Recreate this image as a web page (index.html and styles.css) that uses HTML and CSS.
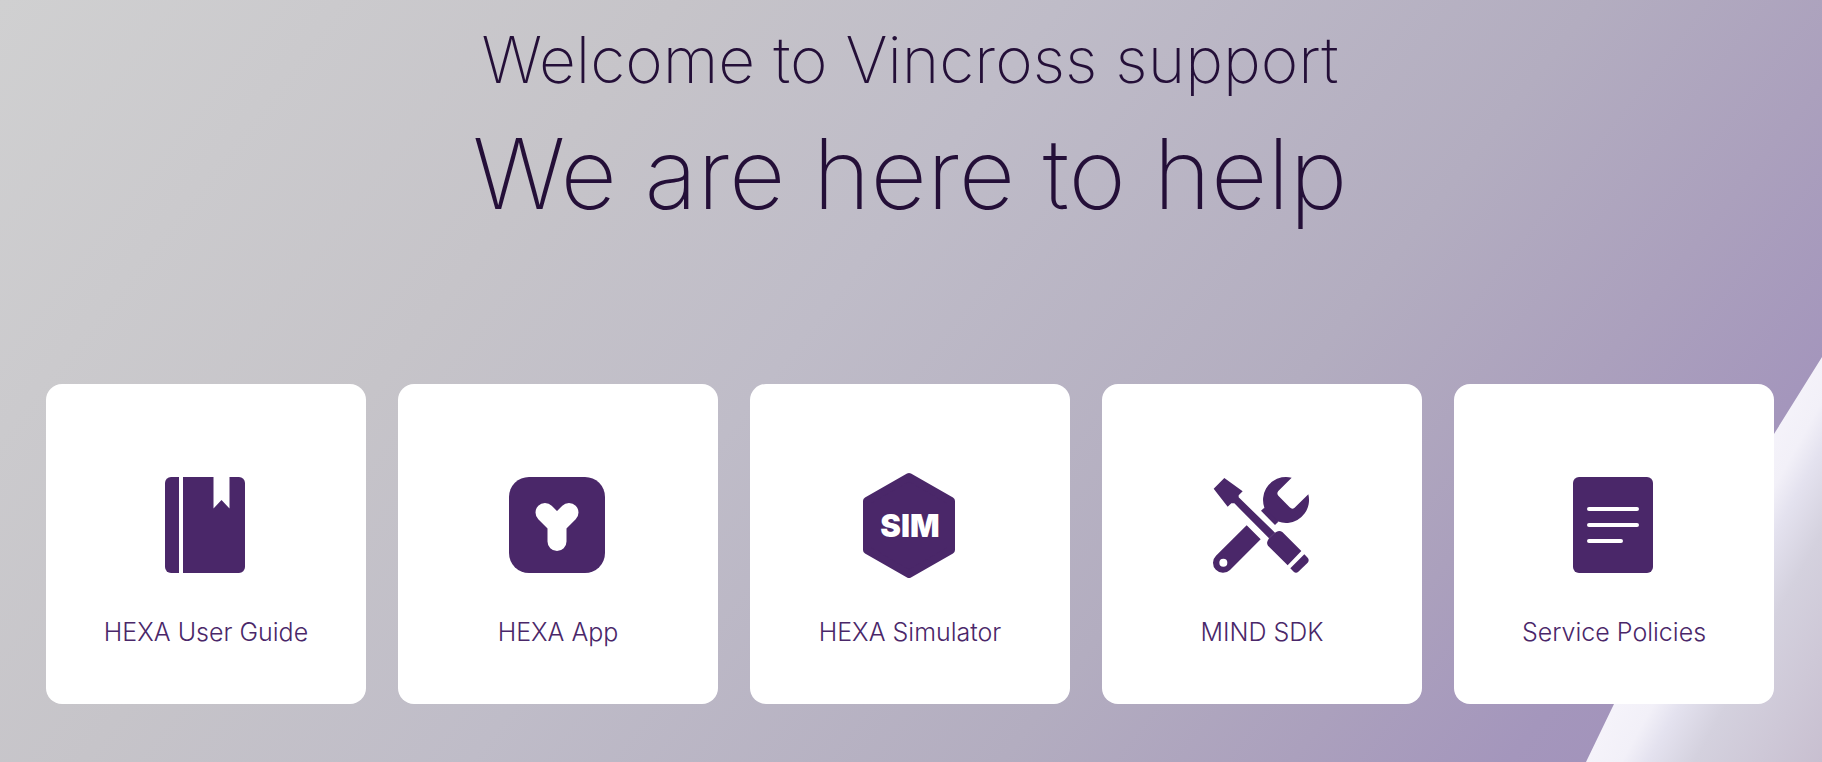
FILE: index.html
```html
<!DOCTYPE html>
<html lang="en">
<head>
<meta charset="utf-8">
<meta name="viewport" content="width=device-width, initial-scale=1">
<title>Vincross support</title>
<link rel="stylesheet" href="styles.css">
</head>
<body>
<main class="support">
  <svg class="backdrop" viewBox="0 0 1822 762" preserveAspectRatio="none" aria-hidden="true">
    <defs>
      <linearGradient id="shell" gradientUnits="userSpaceOnUse" x1="1586" y1="762" x2="1766" y2="862">
        <stop offset="0" stop-color="#f5f3fa"/>
        <stop offset="0.15" stop-color="#f2f0f8"/>
        <stop offset="0.26" stop-color="#e4e2ef"/>
        <stop offset="0.46" stop-color="#d4d1de"/>
        <stop offset="1" stop-color="#c8bfd0"/>
      </linearGradient>
    </defs>
    <path fill="url(#shell)" d="M1822 357 L1774 434 Q1680 566 1614 704 L1586 762 H1822 Z"/>
  </svg>
  <header class="hero">
    <p class="welcome">Welcome to Vincross support</p>
    <h1 class="headline">We are here to help</h1>
  </header>
  <nav class="cards" aria-label="Support topics">
    <a class="card" href="#guide">
      <svg class="icon" viewBox="1 0 130 130" aria-hidden="true">
        <path d="M31 17H39V113H31A6 6 0 0 1 25 107V23A6 6 0 0 1 31 17Z"/>
        <path d="M43 17H73.500V48.500L81.500 40L89.500 48.500V17H99A6 6 0 0 1 105 23V107A6 6 0 0 1 99 113H43Z"/>
      </svg>
      <span class="label">HEXA User Guide</span>
    </a>
    <a class="card" href="#app">
      <svg class="icon" viewBox="3 0 130 130" aria-hidden="true">
        <rect x="19" y="17" width="96" height="96" rx="20"/>
        <path class="limbs" d="M55 52.500L67 64.500L79 52.500M67 64.500V81.500"/>
      </svg>
      <span class="label">HEXA App</span>
    </a>
    <a class="card" href="#simulator">
      <svg class="icon" viewBox="5 0 130 130" aria-hidden="true">
        <path class="hexagon" d="M69 17L111 41V90L69 114L27 90V41Z"/>
        <text class="sim" x="70" y="77">SIM</text>
      </svg>
      <span class="label">HEXA Simulator</span>
    </a>
    <a class="card" href="#sdk">
      <svg class="icon" viewBox="6 0 390 390" aria-hidden="true">
        <path d="M88 54L143 94L131 106V112L240 218L245 215Q254 211 262 216L319 273L278 316L219 257Q214 250 218 242L222 235L118 130H109L98 140L56 86Z"/>
        <path d="M328 283L338 293Q344 300 338 308L310 335Q303 341 296 335L286 325Z"/>
        <path d="M340 103A69 69 0 1 1 290 53L250 93Q244 100 250 107L284 142Q291 149 298 144Z"/>
        <path d="M198 152L208 143L250 185L240 195Z"/>
        <path fill-rule="evenodd" d="M155 196L197 238L105 330A30 30 0 0 1 63 287ZM97 308A12 12 0 1 0 73 308A12 12 0 1 0 97 308Z"/>
        <path class="seam" d="M222 235L240 218"/>
      </svg>
      <span class="label">MIND SDK</span>
    </a>
    <a class="card" href="#policies">
      <svg class="icon" viewBox="-1 0 130 130" aria-hidden="true">
        <rect x="23" y="17" width="80" height="96" rx="6"/>
        <path class="lines" d="M39 49H87M39 65H87M39 81H71"/>
      </svg>
      <span class="label">Service Policies</span>
    </a>
  </nav>
</main>
</body>
</html>
```
FILE: styles.css
```css
* { box-sizing: border-box; }

body {
  margin: 0;
  font-family: Inter, "Open Sans", sans-serif;
  color: #240f38;
}

.support {
  position: relative;
  min-height: 100vh;
  padding: 20px 48px 58px 46px;
  background: linear-gradient(128deg, #d0d0d1 0%, #c6c4c9 28%, #bfbcc8 44%, #b3adc0 66%, #aba0bd 78%, #a496bc 87%, #9f8eb9 100%);
}

.backdrop {
  position: absolute;
  inset: 0;
  width: 100%;
  height: 100%;
}

.hero {
  position: relative;
  text-align: center;
}

.welcome {
  margin: 0 0 14px;
  font-size: 64px;
  font-weight: 200;
  line-height: 80px;
}

.headline {
  margin: 0;
  font-size: 98px;
  font-weight: 200;
  line-height: 120px;
}

.cards {
  position: relative;
  display: grid;
  grid-template-columns: repeat(5, minmax(0, 1fr));
  gap: 32px;
  margin-top: 150px;
}

.card {
  display: flex;
  flex-direction: column;
  align-items: center;
  gap: 26px;
  min-height: 320px;
  padding-top: 76px;
  border-radius: 16px;
  background: #fff;
  color: #4a2769;
  text-decoration: none;
}

.icon {
  width: 130px;
  height: 130px;
  fill: #4a2769;
}

.limbs {
  fill: none;
  stroke: #fff;
  stroke-width: 19;
  stroke-linecap: round;
  stroke-linejoin: round;
}

.hexagon {
  stroke: #4a2769;
  stroke-width: 8;
  stroke-linejoin: round;
}

.sim {
  fill: #fff;
  font-size: 31px;
  font-weight: 900;
  text-anchor: middle;
}

.seam {
  stroke: #8d76a3;
  stroke-width: 1;
}

.lines {
  stroke: #fff;
  stroke-width: 4;
  stroke-linecap: round;
}

.label {
  font-size: 25px;
  font-weight: 300;
  line-height: 32px;
}
```
